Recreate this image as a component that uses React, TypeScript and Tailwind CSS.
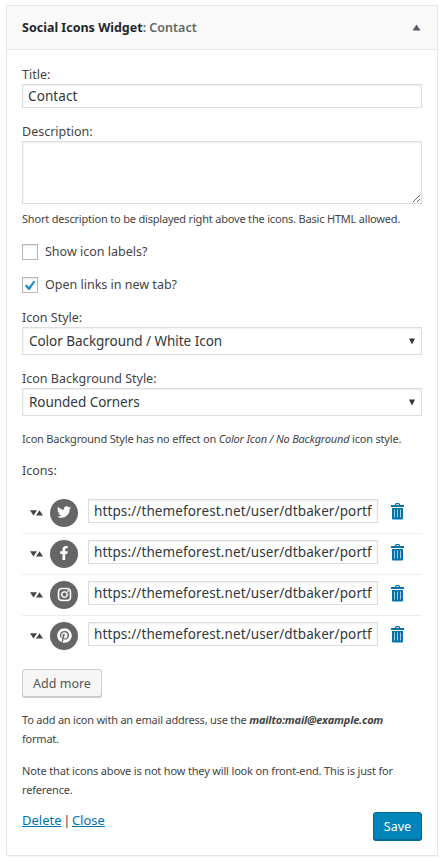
import { FaTwitter, FaFacebookF, FaInstagram, FaPinterest } from "react-icons/fa";
import type { ReactNode } from "react";

const inputClass =
  "block border border-[#ddd] bg-white text-[#32373c] shadow-[inset_0_1px_2px_rgba(0,0,0,0.07)] outline-none";

function Trash() {
  return (
    <svg width="13" height="17" viewBox="0 0 13 17" className="shrink-0 text-[#0073aa]">
      <path d="M4.5 2V1.6Q4.5.6 5.4.6h2.2q.9 0 .9 1V2" fill="none" stroke="currentColor" strokeWidth="1.1" />
      <path fill="currentColor" d="M0 2h13v2H0zM1 5h11v10.5q0 1-1 1H2q-1 0-1-1z" />
      <path d="M3.5 6.5v8M6.5 6.5v8M9.5 6.5v8" stroke="#a9cbdf" strokeWidth="1" />
    </svg>
  );
}

function Select({ children }: { children: ReactNode }) {
  return (
    <div className={`${inputClass} flex h-7 items-center justify-between pr-1.5 pl-1.5`}>
      <span className="text-[13.5px] leading-5 tracking-[-0.04px]">{children}</span>
      <svg width="6" height="7" viewBox="0 0 6 7">
        <path d="M0 .5h6L3 6.5z" fill="#32373c" />
      </svg>
    </div>
  );
}

function Check({ checked, children }: { checked?: boolean; children: ReactNode }) {
  return (
    <label className="flex h-4 items-center gap-[7px]">
      <span className="flex size-4 items-center justify-center border border-[#b4b9be] bg-white shadow-[inset_0_1px_2px_rgba(0,0,0,0.1)]">
        {checked && (
          <svg width="12" height="11" viewBox="0 0 12 11" className="shrink-0">
            <path d="M.8 5.7 2.7 4.5 4.8 7 9.6.8l1.8.6L5.6 10H4.3z" fill="#1e8cbe" />
          </svg>
        )}
      </span>
      <span>{children}</span>
    </label>
  );
}

const rows = [
  { name: "twitter", icon: <FaTwitter size={14} className="-mt-0.5" /> },
  { name: "facebook", icon: <FaFacebookF size={14} className="-mt-0.5" /> },
  { name: "instagram", icon: <FaInstagram size={15} stroke="currentColor" strokeWidth={14} className="-mt-px" /> },
  { name: "pinterest", icon: <FaPinterest size={15} className="-mt-px" /> },
];

export default function App() {
  return (
    <div className="h-[861px] w-[443px] bg-white pt-[5px] pl-1.5 font-['Noto_Sans',sans-serif] text-[12.5px] leading-5 whitespace-nowrap text-[#444]">
      <div className="h-[851px] w-[432px] border border-[#e5e5e5] bg-white shadow-[0_1px_1px_rgba(0,0,0,0.04)]">
        <header className="flex h-11 items-center justify-between border-b border-[#e5e5e5] bg-[#fafafa] pr-4 pl-[15px]">
          <h3 className="text-[12.5px] font-bold text-[#23282d]">
            <span>Social Icons Widget</span>
            <span className="font-semibold text-[#666]">: Contact</span>
          </h3>
          <svg width="9" height="7" viewBox="0 0 9 7">
            <path d="M4.5.5 8.5 6.5h-8z" fill="#555d66" />
          </svg>
        </header>
        <div className="px-[15px] pt-[15px]">
          <div className="-mb-px h-5">Title:</div>
          <input defaultValue="Contact" className={`${inputClass} h-6 w-full px-[5px] text-[13.5px] tracking-[0.1px]`} />
          <div className="mt-3.5 -mb-px h-5">Description:</div>
          <textarea className={`${inputClass} h-[63px] w-full resize`} />
          <p className="mt-[5px] h-5 text-[11px] tracking-[-0.19px]">Short description to be displayed right above the icons. Basic HTML allowed.</p>
          <div className="mt-[15px]"><Check>Show icon labels?</Check></div>
          <div className="mt-[17px]"><Check checked>Open links in new tab?</Check></div>
          <div className="mt-[15px] -mb-px h-5">Icon Style:</div>
          <Select>Color Background / White Icon</Select>
          <div className="mt-3.5 -mb-px h-5">Icon Background Style:</div>
          <Select>Rounded Corners</Select>
          <p className="mt-[13px] h-5 text-[11px] tracking-[-0.19px]">
            Icon Background Style has no effect on <i>Color Icon / No Background</i> icon style.
          </p>
          <div className="mt-3 h-5">Icons:</div>
          <ul className="mt-3">
            {rows.map((r) => (
              <li key={r.name} className="flex h-[41px] items-start border-b border-[#eee] pt-1.5 pl-2 last:border-transparent">
                <svg width="14" height="6" viewBox="0 0 14 6" className="mt-[11px] shrink-0">
                  <path d="M0 .3h7L3.5 5.5zM6 5.5h7L9.5.3z" fill="#444" />
                </svg>
                <span className="ml-1.5 flex size-7 shrink-0 items-center justify-center rounded-full bg-[#666] text-white">{r.icon}</span>
                <input
                  defaultValue="https://themeforest.net/user/dtbaker/portf"
                  className={`${inputClass} ml-2.5 h-6 w-[290px] px-[5px] text-[13.5px] tracking-[0.11px]`}
                />
                <span className="mt-1 ml-[13px]"><Trash /></span>
              </li>
            ))}
          </ul>
          <button className="mt-3 block h-7 w-20 rounded-[3px] border border-[#ccc] bg-[#f7f7f7] pt-0.5 text-[#555] shadow-[0_1px_0_#ccc]">Add more</button>
          <p className="mt-[13px] text-[11px] leading-[19px] tracking-[-0.22px]">
            To add an icon with an email address, use the <b><i>mailto:mail@example.com</i></b>
            <br />
            format.
          </p>
          <p className="mt-[13px] text-[11px] leading-[19px] tracking-[-0.17px]">
            Note that icons above is not how they will look on front-end. This is just for
            <br />
            reference.
          </p>
          <div className="mt-[11px] flex items-start justify-between">
            <div className="text-[13px] [word-spacing:-1.8px]">
              <a className="text-[#0073aa] underline">Delete</a> | <a className="text-[#0073aa] underline">Close</a>
            </div>
            <button className="mt-0.5 h-7 w-[49px] rounded-[3px] border border-[#006799] bg-[#0085ba] pt-px text-white shadow-[0_1px_0_#006799]">Save</button>
          </div>
        </div>
      </div>
    </div>
  );
}
